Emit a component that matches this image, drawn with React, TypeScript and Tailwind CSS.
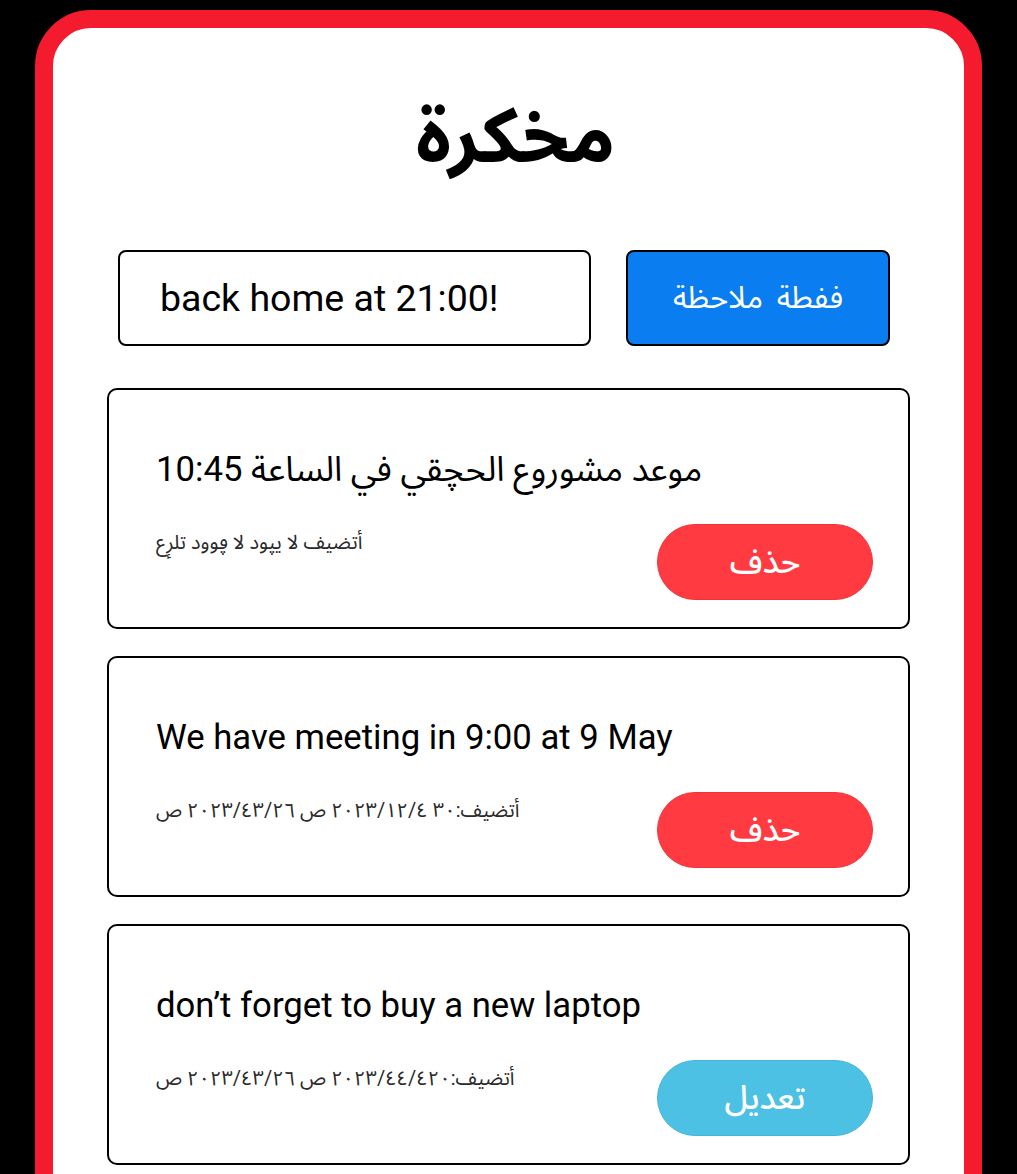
import { FC, ReactElement, useState } from "react";

type Note = {
    id: number;
    text: string;
    meta: string;
    action: "delete" | "edit";
};

const notes: Note[] = [
    {
        id: 1,
        text: "موعد مشوروع الحچقي في الساعة 10:45",
        meta: "أتضيف لا يپود لا ڥوود تلرٕع",
        action: "delete",
    },
    {
        id: 2,
        text: "We have meeting in 9:00 at 9 May",
        meta: "أتضيف:٣٠ ٢٠٢٣/١٢/٤ ص ٢٠٢٣/٤٣/٢٦ ص",
        action: "delete",
    },
    {
        id: 3,
        text: "don’t forget to buy a new laptop",
        meta: "أتضيف:٢٠٢٣/٤٤/٤٢٠ ص ٢٠٢٣/٤٣/٢٦  ص",
        action: "edit",
    },
];

const NoteCard: FC<{ note: Note }> = ({ note }): ReactElement => {
    return (
        <div className="flex h-[241px] flex-col rounded-[10px] border-2 border-black bg-white pl-[47px] pr-[35px] pt-[58px]">
            <p className="text-left text-[34.7px] leading-[42px] text-black">{note.text}</p>
            <div className="mt-[34px] flex items-start justify-between">
                <p className="mt-[4px] text-[20px] leading-[28px] text-[#2a2a2a]">{note.meta}</p>
                {note.action === "delete" ? (
                    <button className="h-[76px] w-[216px] rounded-full border border-[#f0343a] bg-[#ff3b41] text-[33px] font-medium text-white">
                        حذف
                    </button>
                ) : (
                    <button className="h-[76px] w-[216px] rounded-full border border-[#43b6da] bg-[#4dc1e4] text-[33px] font-medium text-white">
                        تعديل
                    </button>
                )}
            </div>
        </div>
    );
};

export default function App(): ReactElement {
    const [draft, setDraft] = useState("back home at 21:00!");

    return (
        <div
            className="h-[1174px] overflow-hidden bg-black px-[35px] pt-[10px]"
            style={{ fontFamily: "Roboto, 'Noto Sans Arabic', 'Noto Kufi Arabic', 'Noto Sans', 'DejaVu Sans', sans-serif" }}
        >
            <div className="min-h-[1250px] rounded-t-[56px] border-[18px] border-[#f41b2e] bg-white">
                <h1 className="pl-[14px] pt-[62px] text-center text-[76px] font-bold leading-[92px] text-black">
                    مخكرة
                </h1>
                <div className="mt-[68px] flex gap-[35px] pl-[65px] pr-[74px]">
                    <input
                        value={draft}
                        onChange={(e) => setDraft(e.target.value)}
                        className="h-[96px] w-[473px] rounded-[8px] border-2 border-black px-[40px] text-[37.5px] text-black outline-none"
                    />
                    <button className="h-[96px] flex-1 rounded-[8px] border-2 border-black bg-[#0a7df0] text-[31px] text-white [word-spacing:6px]">
                        ففطة ملاحظة
                    </button>
                </div>
                <div className="mt-[42px] flex flex-col gap-[27px] px-[54px]">
                    {notes.map((note) => (
                        <NoteCard key={note.id} note={note} />
                    ))}
                </div>
            </div>
        </div>
    );
}
